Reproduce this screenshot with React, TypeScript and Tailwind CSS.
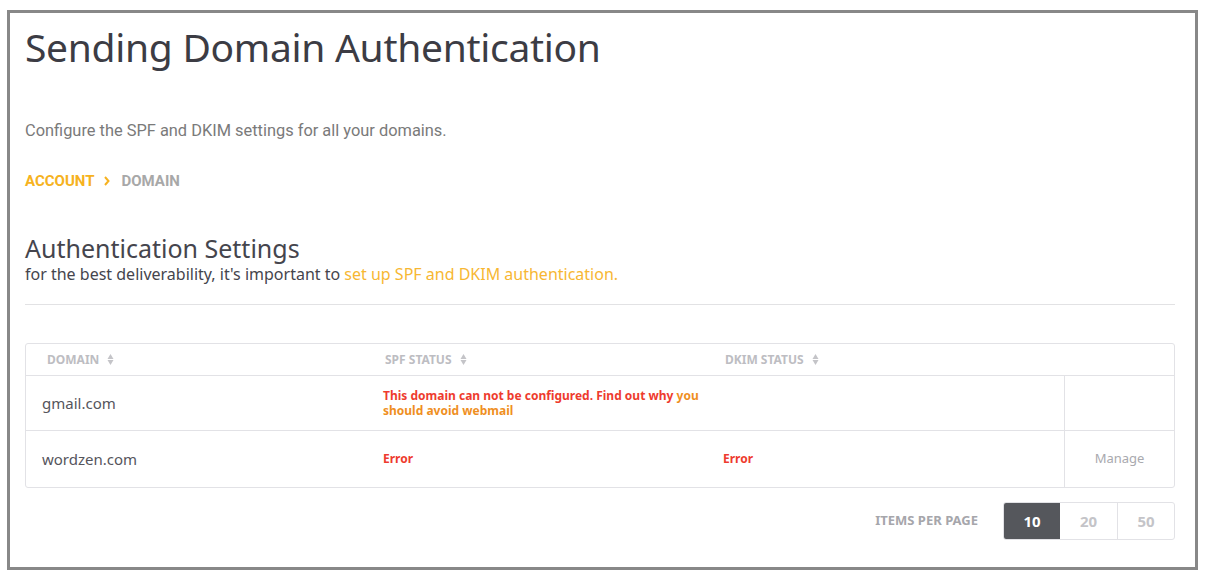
// Sending domain authentication settings page

const ubuntu = { fontFamily: '"Noto Sans", "Open Sans", sans-serif' }

function SortIcon() {
  return (
    <svg width="7" height="11" viewBox="0 0 7 11" className="inline-block ml-2 -mt-0.5">
      <path d="M3.5 0 L6.5 5 H0.5 Z" fill="#c4c4c8" />
      <path d="M3.5 11 L6.5 6 H0.5 Z" fill="#c4c4c8" />
    </svg>
  )
}

export default function App() {
  return (
    <div className="w-[1212px] h-[584px] bg-white pt-[10px] pl-[7px]">
      <div className="w-[1191px] h-[560px] border-[3px] border-[#888888] pl-[15px] pr-[20px]">
        <h1
          className="text-[39px] leading-none text-[#3c3c44] mt-[14px] tracking-[-0.3px]"
          style={ubuntu}
        >
          Sending Domain Authentication
        </h1>
        <p className="mt-[53px] text-[16.4px] text-[#7a7a7a] font-['Roboto',sans-serif]">
          Configure the SPF and DKIM settings for all your domains.
        </p>
        <div className="mt-[26px] flex items-center text-[15px] font-bold font-['Roboto',sans-serif]">
          <span className="text-[#f6b220]">ACCOUNT</span>
          <svg width="6" height="10" viewBox="0 0 6 10" className="ml-[10px] mr-[11px]">
            <path d="M1 1 L4.5 5 L1 9" fill="none" stroke="#f6b220" strokeWidth="2" />
          </svg>
          <span className="text-[#a8a8a8]">DOMAIN</span>
        </div>

        <h2 className="mt-[44px] text-[25px] leading-none text-[#45454d]" style={ubuntu}>
          Authentication Settings
        </h2>
        <p className="mt-[1px] text-[16px] text-[#45454d]" style={ubuntu}>
          for the best deliverability, it's important to{' '}
          <span className="text-[#f7b733]">set up SPF and DKIM authentication.</span>
        </p>
        <div className="mt-[18px] h-px bg-[#e2e2e4]" />

        <div className="mt-[38px] border border-[#e2e2e6] rounded-[3px]" style={ubuntu}>
          <div className="grid grid-cols-[337px_340px_1fr] h-[32px] items-center text-[12px] font-bold text-[#bdbdc2] border-b border-[#e2e2e6]">
            <div className="pl-[21px]">DOMAIN<SortIcon /></div>
            <div className="pl-[22px]">SPF STATUS<SortIcon /></div>
            <div className="pl-[22px]">DKIM STATUS<SortIcon /></div>
          </div>
          <div className="grid grid-cols-[337px_340px_1fr_110px] h-[55px] items-center border-b border-[#e2e2e6]">
            <div className="pl-[16px] text-[15px] text-[#55555c] pt-[1px]">gmail.com</div>
            <div className="pl-[20px] text-[12px] font-bold leading-[15px] col-span-2 text-[#ee3b2e]">
              This domain can not be configured. Find out why{' '}
              <span className="text-[#ef8f1f]">you</span>
              <br />
              <span className="text-[#ef8f1f]">should avoid webmail</span>
            </div>
            <div className="h-full border-l border-[#e2e2e6]" />
          </div>
          <div className="grid grid-cols-[337px_340px_1fr_110px] h-[56px] items-center">
            <div className="pl-[16px] text-[15px] text-[#55555c] pt-[1px]">wordzen.com</div>
            <div className="pl-[20px] text-[12px] font-bold text-[#ee3b2e]">Error</div>
            <div className="pl-[20px] text-[12px] font-bold text-[#ee3b2e]">Error</div>
            <div className="h-full border-l border-[#e2e2e6] flex items-center justify-center text-[13px] text-[#a9a9ae]">
              Manage
            </div>
          </div>
        </div>

        <div className="mt-[14px] flex items-center justify-end" style={ubuntu}>
          <span className="text-[13px] font-bold text-[#a6a6ab] mr-[25px]">ITEMS PER PAGE</span>
          <div className="flex h-[38px] border border-[#e2e2e6] rounded-[3px] overflow-hidden text-[15px] font-bold">
            <div className="w-[56px] flex items-center justify-center bg-[#55575c] text-white">10</div>
            <div className="w-[58px] flex items-center justify-center text-[#c4c4c8] border-r border-[#e2e2e6]">20</div>
            <div className="w-[56px] flex items-center justify-center text-[#c4c4c8]">50</div>
          </div>
        </div>
      </div>
    </div>
  )
}
